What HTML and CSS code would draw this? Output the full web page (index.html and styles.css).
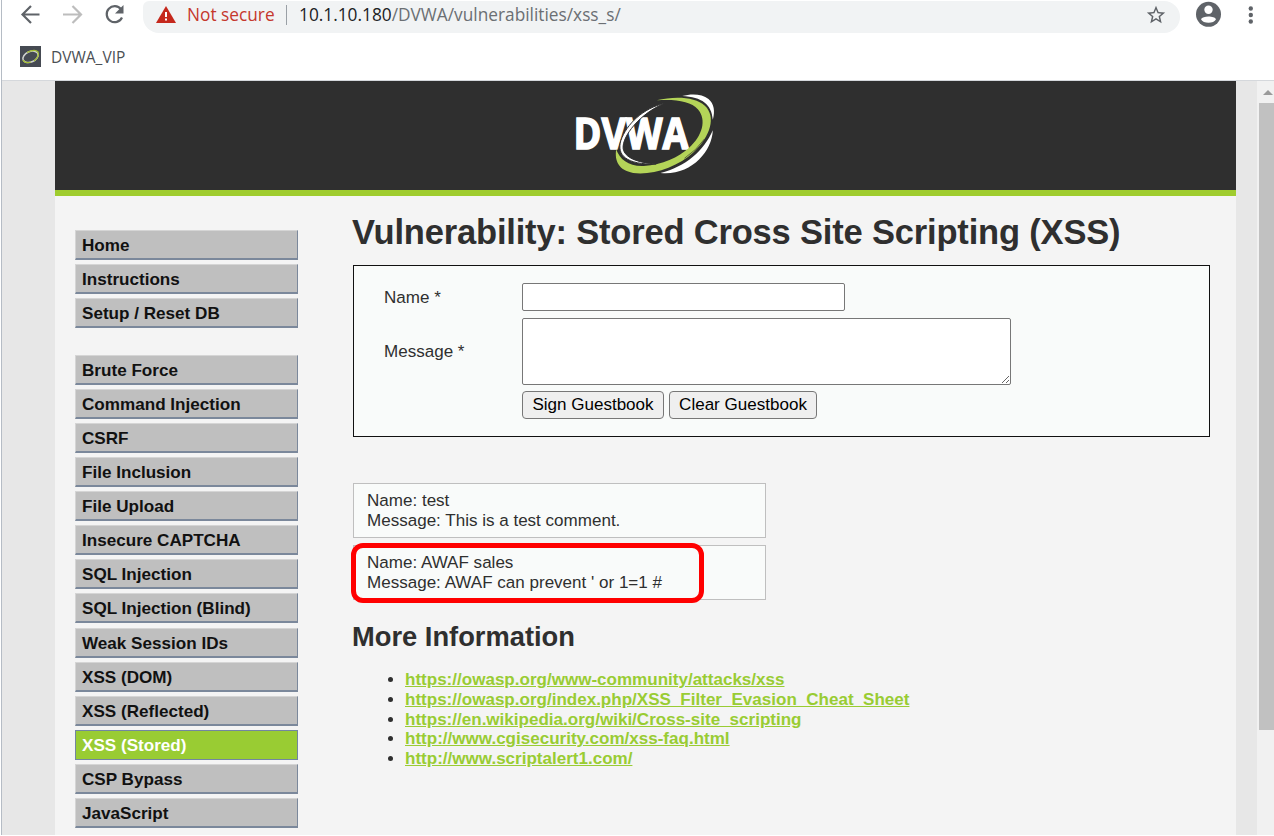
FILE: index.html
```
<!DOCTYPE html>
<html lang="en">
<head>
<meta charset="utf-8">
<title>Vulnerability: Stored Cross Site Scripting (XSS)</title>
<link rel="stylesheet" href="styles.css">
</head>
<body>
<div class="window">
  <div class="toolbar">
    <svg class="nav" width="126" height="33" viewBox="0 0 126 33" fill="none" stroke="#5f6368" stroke-width="2.2">
      <path d="M39.500 14.500H23M31 6L22.500 14.500L31 23"/>
      <path stroke="#bdbdbd" d="M63 14.500H80M72.500 6L81 14.500L72.500 23"/>
      <path d="M121 9.200A8 8 0 1 0 122 17.500"/>
      <path fill="#5f6368" stroke="none" d="M123.500 5V13.500H115Z"/>
    </svg>
    <div class="omnibox">
      <svg class="warn" width="20" height="17" viewBox="0 0 20 17"><path fill="#c5281c" d="M10 0L20 17H0Z"/><path stroke="#fff" stroke-width="2" d="M10 6V11M10 12.500V14.500"/></svg>
      <span class="insecure">Not secure</span>
      <span class="divider"></span>
      <span class="url"><b>10.1.10.180</b>/DVWA/vulnerabilities/xss_s/</span>
      <svg class="star" width="22" height="22" viewBox="0 0 24 24"><path fill="#5f6368" d="M22 9.240l-7.190-.62L12 2 9.190 8.630 2 9.240l5.460 4.730L5.820 21 12 17.270 18.180 21l-1.630-7.030L22 9.240zM12 15.400l-3.760 2.270 1-4.280-3.320-2.880 4.380-.38L12 6.100l1.710 4.040 4.380.38-3.320 2.880 1 4.280L12 15.400z"/></svg>
    </div>
    <svg class="right" width="92" height="33" viewBox="0 0 92 33">
      <circle cx="26.500" cy="14.300" r="12.500" fill="#5f6368"/>
      <circle cx="26.500" cy="9.700" r="4.200" fill="#fff"/>
      <path fill="#fff" d="M19 19.300C20.500 15.500 32.500 15.500 34 19.300C32 24 21 24 19 19.300Z"/>
      <g fill="#5f6368"><circle cx="68.800" cy="8.500" r="2.200"/><circle cx="68.800" cy="15" r="2.200"/><circle cx="68.800" cy="21.500" r="2.200"/></g>
    </svg>
  </div>
  <div class="bookmarks">
    <svg width="21" height="21" viewBox="0 0 21 21"><rect width="21" height="21" fill="#454a52"/><ellipse cx="10.500" cy="10.800" rx="8" ry="5.200" fill="none" stroke="#cfd3cf" stroke-width="1.500" transform="rotate(-24 10.500 10.800)"/><path d="M7 6.500Q15 2.500 18 6Q20 10 14 15M3 14Q5 18 11 16" fill="none" stroke="#a4bd32" stroke-width="1.200"/></svg>
    <span>DVWA_VIP</span>
  </div>
  <div class="viewport">
    <div class="container">
      <header class="banner">
        <svg width="150" height="90" viewBox="0 0 150 90">
          <text class="logo" x="2.500" y="59.300" textLength="115" lengthAdjust="spacingAndGlyphs">DVWA</text>
          <g transform="translate(-10.500 -9.700) scale(.3333)">
            <path fill="#fff" d="M365 47C395 39 425 41 444 56C461 71 464 92 457 118C453 72 425 50 365 47Z"/>
            <path fill="#b4d458" d="M288 60C345 46 405 50 433 76C468 108 450 168 400 215C352 260 275 286 218 278C175 270 162 243 167 207C178 238 205 259 250 257C305 254 355 230 385 203C425 168 440 119 412 87C392 62 342 56 288 60Z"/>
            <path fill="#fff" stroke="#2f2f2f" stroke-width="3" d="M313 69C248 83 198 132 181 181C168 224 197 254 287 251C229 247 193 232 188 205C184 169 238 99 313 69Z"/>
            <path fill="#fff" d="M457 150C454 216 390 287 300 278C375 260 430 212 457 150Z"/>
            <path fill="none" stroke="#2f2f2f" stroke-width="2" d="M432 176Q408 210 372 234"/>
          </g>
        </svg>
      </header>
      <div class="columns">
        <nav class="menu">
          <ul><li>Home</li><li>Instructions</li><li>Setup / Reset DB</li></ul>
          <ul><li>Brute Force</li><li>Command Injection</li><li>CSRF</li><li>File Inclusion</li><li>File Upload</li><li>Insecure CAPTCHA</li><li>SQL Injection</li><li>SQL Injection (Blind)</li><li>Weak Session IDs</li><li>XSS (DOM)</li><li>XSS (Reflected)</li><li class="selected">XSS (Stored)</li><li>CSP Bypass</li><li>JavaScript</li></ul>
        </nav>
        <main class="content">
          <h1>Vulnerability: Stored Cross Site Scripting (XSS)</h1>
          <form class="guestbook">
            <label for="name">Name *</label><input id="name" type="text">
            <label for="message">Message *</label><textarea id="message"></textarea>
            <div class="actions"><button type="button" class="sign">Sign Guestbook</button><button type="button" class="clear">Clear Guestbook</button></div>
          </form>
          <div class="comment"><div>Name: test</div><div>Message: This is a test comment.</div></div>
          <div class="comment"><div>Name: AWAF sales</div><div>Message: AWAF can prevent ' or 1=1 #</div><span class="highlight"></span></div>
          <h2>More Information</h2>
          <ul class="links">
            <li><a href="#">https://owasp.org/www-community/attacks/xss</a></li>
            <li><a href="#">https://owasp.org/index.php/XSS_Filter_Evasion_Cheat_Sheet</a></li>
            <li><a href="#">https://en.wikipedia.org/wiki/Cross-site_scripting</a></li>
            <li><a href="#">http://www.cgisecurity.com/xss-faq.html</a></li>
            <li><a href="#">http://www.scriptalert1.com/</a></li>
          </ul>
        </main>
      </div>
    </div>
    <div class="scrollbar"><span class="up"></span><span class="thumb"></span></div>
  </div>
</div>
</body>
</html>
```
FILE: styles.css
```
* { box-sizing: border-box; }
body { margin: 0; background: #fff; font-family: "Liberation Sans", Arial, sans-serif; }
.window { height: 835px; overflow: hidden; margin-left: 1px; border-left: 1px solid #b5bcc5; display: flex; flex-direction: column; }
.toolbar { height: 33px; display: flex; flex: none; font-family: "Open Sans", "Noto Sans", sans-serif; font-size: 17.300px; }
.nav, .right { flex: none; display: block; margin-left: -2px; }
.right { margin-left: 2px; }
.omnibox { width: 1037px; margin: 1px 0 0 17px; height: 32px; display: flex; align-items: center; background: #f1f3f4; border-radius: 6px 16px 16px 16px; padding: 0 13px 5px 13px; white-space: nowrap; }
.omnibox svg { flex: none; }
.insecure { width: 87px; margin-left: 11px; color: #c5372c; }
.divider { width: 1px; height: 20px; background: #9aa0a6; margin: 0 12px; }
.url { color: #6b6f73; flex: 1; }
.url b { font-weight: 400; color: #202124; }
.bookmarks { height: 48px; flex: none; display: flex; align-items: center; gap: 10px; padding-left: 18px; border-bottom: 1px solid #d5d8dc; color: #4b4f54; font: 15.500px "Open Sans", sans-serif; }
.viewport { flex: 1; min-height: 0; background: #e7e7e7; display: flex; justify-content: space-between; padding-left: 53px; }
.container { width: 1181px; background: #f4f4f4; }
.banner { height: 115px; background: #2f2f2f; border-bottom: 6px solid #9fcc2e; display: flex; justify-content: center; padding-top: 9px; }
.logo { font: 700 43px "Open Sans", sans-serif; fill: #fff; stroke: #fff; stroke-width: 1.500px; }
.columns { display: flex; }
.menu { width: 223px; margin: 34px 0 0 20px; }
.menu ul { list-style: none; margin: 0 0 26.300px; padding: 0; }
.menu li { height: 30px; margin-bottom: 4.130px; padding-left: 6px; font: 700 17.100px/29px "Liberation Sans", sans-serif; background: #bfbfbf; border: solid #7b889b; border-width: 1px 1.500px 2px 1px; border-top-color: #d5d5d5; border-left-color: #d5d5d5; color: #111; white-space: nowrap; }
.menu li.selected { background: #9c3; border: 1px solid #7386a0; color: #fff; }
.content { margin-left: 55px; width: 857px; color: #2f2f2f; font-size: 17.050px; }
h1 { font-size: 34.500px; letter-spacing: -.18px; line-height: 40px; margin: 16px 0 13px -1px; white-space: nowrap; }
.guestbook { height: 172px; border: 1px solid #111; background: #f9fbfa; display: grid; grid-template-columns: 138px auto; grid-template-rows: 28px 67px 28px; row-gap: 6.500px; padding: 17px 0 0 30px; align-items: center; justify-content: start; }
.guestbook label { padding-top: 1px; }
.guestbook input { width: 323px; height: 28px; border: 1px solid #777; border-radius: 2px; padding: 0; }
.guestbook textarea { width: 489px; height: 67px; display: block; border: 1px solid #777; border-radius: 2px; }
.actions { grid-column: 2; display: flex; gap: 5px; }
.actions button { height: 28px; border: 1px solid #777; border-radius: 4px; background: #efefef; color: #000; font: 17.050px "Liberation Sans", sans-serif; padding: 0; white-space: nowrap; }
.sign { width: 142px; }
.clear { width: 148px; }
.comment { position: relative; width: 413px; height: 55px; border: 1px solid #bfbfbf; background: #f9fbfa; margin-bottom: 7px; padding: 7px 0 0 13px; line-height: 19.700px; white-space: nowrap; }
.comment div { height: 19.700px; }
.guestbook + .comment { margin-top: 46px; }
.highlight { position: absolute; left: -3px; top: -3px; width: 353px; height: 60px; border: 5px solid #f00; border-radius: 12px; }
h2 { font-size: 27.300px; line-height: 32px; margin: 21px 0 17px -1px; }
.links { margin: 0; padding-left: 52px; line-height: 19.750px; }
.links a { color: #9c3; font-weight: 700; }
.links li { height: 19.750px; white-space: nowrap; }
.scrollbar { width: 17px; background: #f1f1f1; display: flex; flex-direction: column; align-items: flex-end; }
.up { border: 5px solid transparent; border-top-width: 0; border-bottom-color: #9a9a9a; margin: 9px 1px 8px 0; }
.thumb { width: 15px; height: 627px; background: #c1c1c1; }
```
